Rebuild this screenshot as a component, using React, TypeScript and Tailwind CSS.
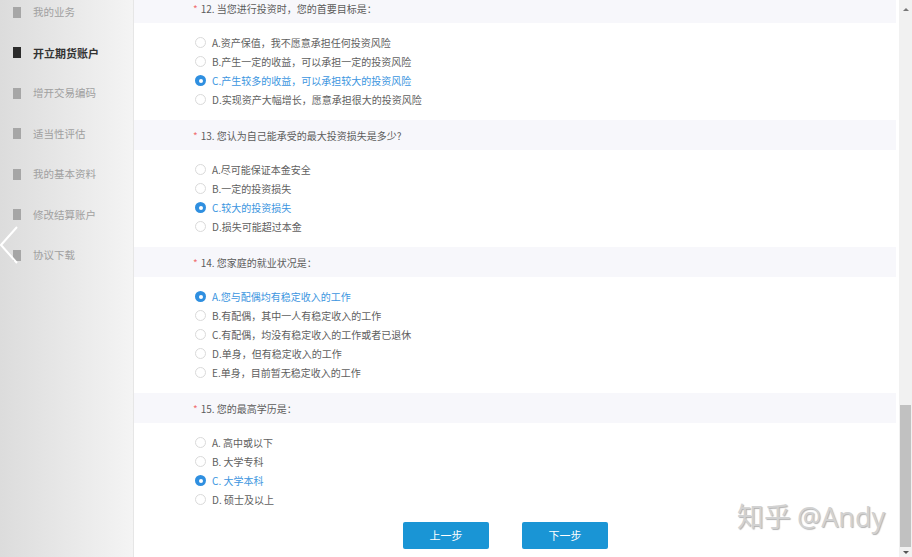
import React from 'react';

type Question = {
  no: number;
  title: string;
  options: string[];
  selected: number;
};

const questions: Question[] = [
  {
    no: 12,
    title: '当您进行投资时，您的首要目标是：',
    options: [
      'A.资产保值，我不愿意承担任何投资风险',
      'B.产生一定的收益，可以承担一定的投资风险',
      'C.产生较多的收益，可以承担较大的投资风险',
      'D.实现资产大幅增长，愿意承担很大的投资风险',
    ],
    selected: 2,
  },
  {
    no: 13,
    title: '您认为自己能承受的最大投资损失是多少?',
    options: ['A.尽可能保证本金安全', 'B.一定的投资损失', 'C.较大的投资损失', 'D.损失可能超过本金'],
    selected: 2,
  },
  {
    no: 14,
    title: '您家庭的就业状况是：',
    options: [
      'A.您与配偶均有稳定收入的工作',
      'B.有配偶，其中一人有稳定收入的工作',
      'C.有配偶，均没有稳定收入的工作或者已退休',
      'D.单身，但有稳定收入的工作',
      'E.单身，目前暂无稳定收入的工作',
    ],
    selected: 0,
  },
  {
    no: 15,
    title: '您的最高学历是：',
    options: ['A. 高中或以下', 'B. 大学专科', 'C. 大学本科', 'D. 硕士及以上'],
    selected: 2,
  },
];

const menu = ['我的业务', '开立期货账户', '增开交易编码', '适当性评估', '我的基本资料', '修改结算账户', '协议下载'];

function Radio({ checked }: { checked: boolean }) {
  if (checked) {
    return (
      <span className="w-[11px] h-[11px] rounded-full bg-[#2f8fe0] flex items-center justify-center shrink-0">
        <span className="w-[4px] h-[4px] rounded-full bg-white" />
      </span>
    );
  }
  return <span className="w-[11px] h-[11px] rounded-full border border-[#dadada] bg-white shrink-0" />;
}

export default function App() {
  return (
    <div
      className="relative w-[912px] h-[557px] overflow-hidden flex bg-white"
      style={{ fontFamily: '"Noto Sans CJK SC", "Noto Sans", sans-serif' }}
    >
      {/* sidebar */}
      <div className="w-[134px] shrink-0 bg-gradient-to-r from-[#dcdcdc] to-[#f4f4f4] border-r border-[#e6e6e6]">
        <div className="flex flex-col mt-[-8px]">
          {menu.map((item, i) => {
            const active = i === 1;
            return (
              <div key={item} className="h-[40.5px] flex items-center pl-[13px] gap-[12px]">
                <span className={`w-[8px] h-[11px] ${active ? 'bg-[#2b2b2b]' : 'bg-[#a6a6a6]'}`} />
                <span
                  className={
                    active ? 'text-[11px] font-bold text-[#333]' : 'text-[10.5px] text-[#a0a0a0]'
                  }
                >
                  {item}
                </span>
              </div>
            );
          })}
        </div>
      </div>

      {/* main */}
      <div className="flex-1 pr-[3px]">
        <div className="mt-[-7px]">
          {questions.map((q) => (
            <div key={q.no} className="pb-[11px]">
              <div className="h-[30px] bg-[#f7f7fb] flex items-center pl-[59px] text-[10px] text-[#5c5c5c]">
                <span className="text-[#f07070] mr-[3px]">*</span>
                <span>
                  {q.no}. {q.title}
                </span>
              </div>
              <div className="pt-[10px] pl-[61px] flex flex-col">
                {q.options.map((opt, i) => (
                  <div key={opt} className="h-[19px] flex items-center gap-[6px]">
                    <Radio checked={i === q.selected} />
                    <span
                      className={`text-[10px] ${i === q.selected ? 'text-[#3b95e0]' : 'text-[#606060]'}`}
                    >
                      {opt}
                    </span>
                  </div>
                ))}
              </div>
            </div>
          ))}
          <div className="flex gap-[33px] pl-[269px] pt-[2px]">
            <button className="w-[86px] h-[27px] bg-[#1a95d5] rounded-[2px] text-white text-[11px]">
              上一步
            </button>
            <button className="w-[86px] h-[27px] bg-[#1a95d5] rounded-[2px] text-white text-[11px]">
              下一步
            </button>
          </div>
        </div>
      </div>

      {/* scrollbar */}
      <div className="w-[13px] shrink-0 bg-[#f1f1f1] flex flex-col items-center">
        <div className="h-[18px] flex items-center justify-center">
          <span className="w-0 h-0 border-l-[3px] border-r-[3px] border-b-[3px] border-l-transparent border-r-transparent border-b-[#777]" />
        </div>
        <div className="flex-1 w-full flex flex-col">
          <div className="h-[387px]" />
          <div className="h-[142px] bg-[#c1c1c1] mx-[1px]" />
        </div>
        <div className="h-[10px] flex items-center justify-center">
          <span className="w-0 h-0 border-l-[3px] border-r-[3px] border-t-[3px] border-l-transparent border-r-transparent border-t-[#555]" />
        </div>
      </div>

      {/* collapse chevron */}
      <svg className="absolute left-0 top-[226px]" width="20" height="38" viewBox="0 0 20 38">
        <path d="M17 1 L1 19 L17 37" fill="none" stroke="#ffffff" strokeWidth="2" />
      </svg>

      {/* watermark */}
      <div className="absolute left-[737px] top-[496px] text-[27px] text-[#d2d2d2] [text-shadow:1px_1px_1px_rgba(0,0,0,0.3)] whitespace-nowrap">
        知乎 <span style={{ fontFamily: '"Open Sans", "Noto Sans", sans-serif' }}>@Andy</span>
      </div>
    </div>
  );
}
